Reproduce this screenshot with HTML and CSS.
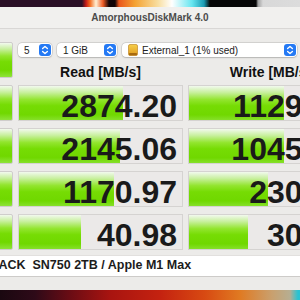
FILE: index.html
```html
<!DOCTYPE html>
<html lang="en">
<head>
    <meta charset="UTF-8">
    <meta name="viewport" content="width=device-width, initial-scale=1.0">
    <title>AmorphousDiskMark 4.0</title>
    <link rel="stylesheet" href="styles.css">
</head>
<body>
    <div class="wallpaper wallpaper-top"></div>

    <header class="titlebar">AmorphousDiskMark 4.0</header>

    <main class="panel">
        <div class="results">
            <button class="test-button"></button>
            <div class="controls">
                <div class="selects">
                    <div class="select select-count">
                        <span class="select-text">5</span>
                        <span class="stepper"><svg width="8" height="10" viewBox="0 0 8 10"><path d="M1.6 3.6 4 1.4 6.4 3.6M1.6 6.4 4 8.6 6.4 6.4" fill="none" stroke="#fff" stroke-width="1.3" stroke-linecap="round" stroke-linejoin="round"/></svg></span>
                    </div>
                    <div class="select select-size">
                        <span class="select-text">1 GiB</span>
                        <span class="stepper"><svg width="8" height="10" viewBox="0 0 8 10"><path d="M1.6 3.6 4 1.4 6.4 3.6M1.6 6.4 4 8.6 6.4 6.4" fill="none" stroke="#fff" stroke-width="1.3" stroke-linecap="round" stroke-linejoin="round"/></svg></span>
                    </div>
                    <div class="select select-volume">
                        <svg class="drive" width="10" height="12" viewBox="0 0 10 12">
                            <defs>
                                <linearGradient id="drv" x1="0" y1="0" x2="0" y2="1">
                                    <stop offset="0" stop-color="#f6cf4a"/>
                                    <stop offset="1" stop-color="#e09a1c"/>
                                </linearGradient>
                            </defs>
                            <rect x="0.5" y="0.5" width="9" height="11" rx="1.5" fill="url(#drv)" stroke="#b87a12" stroke-width="0.6"/>
                            <rect x="1" y="9" width="8" height="2.2" rx="0.8" fill="#a86a0e"/>
                        </svg>
                        <span class="select-text">External_1 (1% used)</span>
                        <span class="stepper"><svg width="8" height="10" viewBox="0 0 8 10"><path d="M1.6 3.6 4 1.4 6.4 3.6M1.6 6.4 4 8.6 6.4 6.4" fill="none" stroke="#fff" stroke-width="1.3" stroke-linecap="round" stroke-linejoin="round"/></svg></span>
                    </div>
                </div>
                <div class="labels">
                    <h2>Read [MB/s]</h2>
                    <h2>Write [MB/s]</h2>
                </div>
            </div>

            <!-- SEQ1M QD8 -->
            <button class="test-button"></button>
            <div class="cell"><div class="bar" style="width: 64%"></div><span class="value">2874.20</span></div>
            <div class="cell"><div class="bar" style="width: 58%"></div><span class="value">1129.35</span></div>

            <!-- SEQ128K QD32 -->
            <button class="test-button"></button>
            <div class="cell"><div class="bar" style="width: 62%"></div><span class="value">2145.06</span></div>
            <div class="cell"><div class="bar" style="width: 58%"></div><span class="value">1045.27</span></div>

            <!-- RND4K QD64 -->
            <button class="test-button"></button>
            <div class="cell"><div class="bar" style="width: 58%"></div><span class="value">1170.97</span></div>
            <div class="cell"><div class="bar" style="width: 48.5%"></div><span class="value">230.64</span></div>

            <!-- RND4K -->
            <button class="test-button"></button>
            <div class="cell"><div class="bar" style="width: 38%"></div><span class="value">40.98</span></div>
            <div class="cell"><div class="bar" style="width: 36%"></div><span class="value">30.12</span></div>
        </div>

        <div class="comment">WD_BLACK  SN750 2TB / Apple M1 Max</div>
    </main>

    <div class="wallpaper wallpaper-bottom"></div>
</body>
</html>
```

FILE: styles.css
```css
:root {
    --panel-color: #ecebe9;
    --titlebar-color: #f1f0ee;
    --border-color: #d5d3d1;
    --text-color: #1a1a1a;
    --blue: #2479f4;
    --green-bar: linear-gradient(to bottom, #f2f9ee 0%, #c8f09e 18%, #92e52e 38%, #76dc04 55%, #70d800 80%, #8ee33a 100%);
}

* {
    box-sizing: border-box;
}

html, body {
    margin: 0;
}

body {
    width: 300px;
    height: 300px;
    overflow: hidden;
    background-color: var(--panel-color);
    color: var(--text-color);
    font-family: "Liberation Sans", Arial, sans-serif;
}

.wallpaper-top {
    height: 7px;
    background: linear-gradient(to right,
        #2b1026 0, #2b1026 82px, #c41c18 86px, #f36a1e 90px, #fff0d4 96px,
        #f05a22 103px, #120508 109px, #120508 115px, #e9561c 119px,
        #f4a232 135px, #f8dea0 158px, #ffffff 172px, #66e6f0 192px,
        #1a9cb4 204px, #060606 210px, #060606 256px, #a0a0a0 258px,
        #d8d8d8 263px, #dcdcdc 300px);
}

.titlebar {
    height: 22px;
    line-height: 21px;
    background-color: var(--titlebar-color);
    border-bottom: 1px solid #d9d7d5;
    text-align: center;
    font-size: 10px;
    font-weight: bold;
    color: #4c4c4c;
}

.panel {
    width: 430px;
    height: 261px;
    margin-left: -70px;
    padding-top: 13px;
}

.results {
    display: grid;
    grid-template-columns: 83px 165px 165px;
    grid-template-rows: repeat(5, 36px);
    column-gap: 5px;
    row-gap: 7px;
}

.test-button {
    padding: 0;
    border: 1px solid #cfcdcb;
    border-radius: 2px;
    background: var(--green-bar);
}

.controls {
    grid-column: 2 / 4;
    display: flex;
    flex-direction: column;
}

.selects {
    display: flex;
    gap: 5px;
    height: 14px;
    margin-top: 1px;
}

.select {
    display: flex;
    align-items: center;
    height: 14px;
    padding-left: 6px;
    padding-right: 1px;
    background-color: #fff;
    border-radius: 4px;
    box-shadow: 0 0 0 0.5px rgba(0,0,0,0.16), 0 0.5px 1.5px rgba(0,0,0,0.16);
    font-size: 10px;
    color: #222;
}

.select-count {
    width: 34px;
}

.select-size {
    width: 60px;
}

.select-volume {
    width: 175px;
}

.select-text {
    flex: 1;
    white-space: nowrap;
}

.drive {
    margin-right: 4px;
}

.stepper {
    display: flex;
    align-items: center;
    justify-content: center;
    width: 12px;
    height: 12px;
    border-radius: 3px;
    background-color: var(--blue);
}

.labels {
    display: grid;
    grid-template-columns: 165px 165px;
    column-gap: 5px;
    margin-top: 7px;
}

.labels h2 {
    margin: 0;
    font-size: 14px;
    line-height: 16px;
    text-align: center;
    color: #111;
}

.cell {
    display: grid;
    background-color: #ebe9e8;
    border: 1px solid var(--border-color);
    overflow: hidden;
}

.cell > * {
    grid-area: 1 / 1;
}

.bar {
    height: 100%;
    background: var(--green-bar);
}

.value {
    justify-self: end;
    align-self: center;
    padding-top: 4px;
    padding-right: 5px;
    font-size: 32px;
    font-weight: bold;
    line-height: 1;
    color: #1a1a1a;
}

.comment {
    height: 22px;
    margin-top: 5px;
    padding-left: 24px;
    background-color: #fff;
    border-top: 1px solid #e2e0de;
    border-bottom: 1px solid #cdcbc9;
    font-size: 12.5px;
    font-weight: bold;
    line-height: 19px;
    white-space: pre;
    color: #1c1c1c;
}

.wallpaper-bottom {
    height: 10px;
    background: linear-gradient(to right,
        #1a0810 0, #2e0a18 35px, #6a0c14 70px, #a81410 110px,
        #c42210 160px, #d84a12 205px, #e07a22 240px, #c9a06e 272px,
        #b6ae92 290px, #28c2d2 298px);
}
```
